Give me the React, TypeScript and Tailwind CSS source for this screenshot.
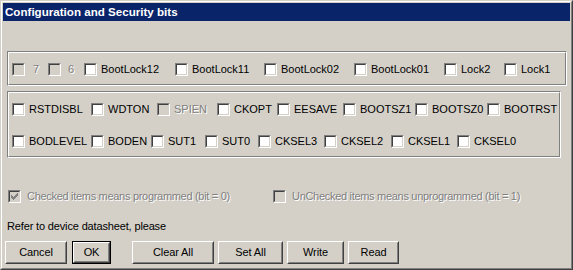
import React from "react";

const CHECK_ROWS = [
  "......#",
  ".....##",
  "#...###",
  "##.###.",
  "#####..",
  ".###...",
  "..#....",
];

function CheckMark({ color }: { color: string }) {
  return (
    <svg width="7" height="7" viewBox="0 0 7 7" shapeRendering="crispEdges">
      {CHECK_ROWS.flatMap((r, y) =>
        r.split("").map((c, x) =>
          c === "#" ? <rect key={`${x}-${y}`} x={x} y={y} width="1" height="1" fill={color} /> : null
        )
      )}
    </svg>
  );
}

function Box({ disabled, checked }: { disabled?: boolean; checked?: boolean }) {
  return (
    <div className="w-[13px] h-[13px] shrink-0 border border-t-[#808080] border-l-[#808080] border-r-white border-b-white">
      <div
        className={`w-full h-full border border-t-[#404040] border-l-[#404040] border-r-[#d4d0c8] border-b-[#d4d0c8] flex items-center justify-center ${
          disabled ? "bg-[#d4d0c8]" : "bg-white"
        }`}
      >
        {checked && <CheckMark color={disabled ? "#808080" : "#000000"} />}
      </div>
    </div>
  );
}

type Item = { l: string; w: string; d?: boolean; gap?: string };

function Check({ item }: { item: Item }) {
  return (
    <div className={`flex items-center shrink-0 h-[13px] ${item.w}`}>
      <Box disabled={item.d} />
      <span
        className={`${item.gap ?? "ml-[4px]"} text-[11px] leading-[13px] whitespace-nowrap ${
          item.d ? "text-[#808080] [text-shadow:1px_1px_0_#ffffff]" : "text-black"
        }`}
      >
        {item.l}
      </span>
    </div>
  );
}

const ROW_A: Item[] = [
  { l: "7", w: "w-[36px]", d: true, gap: "ml-[8px]" },
  { l: "6", w: "w-[36px]", d: true, gap: "ml-[7px]" },
  { l: "BootLock12", w: "w-[91px]" },
  { l: "BootLock11", w: "w-[89px]" },
  { l: "BootLock02", w: "w-[90px]" },
  { l: "BootLock01", w: "w-[90px]" },
  { l: "Lock2", w: "w-[60px]" },
  { l: "Lock1", w: "" },
];

const ROW_B: Item[] = [
  { l: "RSTDISBL", w: "w-[79px]" },
  { l: "WDTON", w: "w-[66px]" },
  { l: "SPIEN", w: "w-[60px]", d: true },
  { l: "CKOPT", w: "w-[60px]" },
  { l: "EESAVE", w: "w-[66px]" },
  { l: "BOOTSZ1", w: "w-[72px]" },
  { l: "BOOTSZ0", w: "w-[72px]" },
  { l: "BOOTRST", w: "" },
];

const ROW_C: Item[] = [
  { l: "BODLEVEL", w: "w-[79px]" },
  { l: "BODEN", w: "w-[60px]" },
  { l: "SUT1", w: "w-[54px]" },
  { l: "SUT0", w: "w-[53px]" },
  { l: "CKSEL3", w: "w-[66px]" },
  { l: "CKSEL2", w: "w-[67px]" },
  { l: "CKSEL1", w: "w-[66px]" },
  { l: "CKSEL0", w: "" },
];

function Btn({ label, cls, def }: { label: string; cls: string; def?: boolean }) {
  const face = (
    <div className="h-full w-full border border-t-white border-l-white border-r-[#404040] border-b-[#404040]">
      <div className="h-full w-full border border-t-[#d4d0c8] border-l-[#d4d0c8] border-r-[#808080] border-b-[#808080] flex items-center justify-center text-[11px] leading-[13px] text-black tracking-[-0.1px]">
        {label}
      </div>
    </div>
  );
  return (
    <button type="button" className={`h-[23px] shrink-0 bg-[#d4d0c8] ${cls} ${def ? "border border-black" : ""}`}>
      {face}
    </button>
  );
}

export default function App() {
  return (
    <div className="w-[573px] h-[270px] font-['Liberation_Sans',Arial,sans-serif] border border-t-[#d4d0c8] border-l-[#d4d0c8] border-r-[#404040] border-b-[#404040]">
      <div className="w-full h-full border border-t-white border-l-white border-r-[#808080] border-b-[#808080] bg-[#d4d0c8] p-[1px] flex flex-col">
        {/* Title bar */}
        <div className="h-[18px] shrink-0 bg-[#0a246a] flex items-center pl-[2px]">
          <span className="text-white font-bold text-[11.6px] leading-[14px] whitespace-nowrap">
            Configuration and Security bits
          </span>
        </div>

        {/* Group 1 */}
        <div className="mt-[30px] ml-[4px] w-[560px] h-[35px] shrink-0 border border-t-[#808080] border-l-[#808080] border-r-white border-b-white">
          <div className="h-full border border-t-white border-l-white border-r-[#808080] border-b-[#808080] pt-[10px] pl-[3px] flex">
            {ROW_A.map((it) => (
              <Check key={it.l} item={it} />
            ))}
          </div>
        </div>

        {/* Group 2 */}
        <div className="mt-[5px] ml-[4px] w-[554px] h-[67px] shrink-0 border border-t-[#808080] border-l-[#808080] border-r-white border-b-white">
          <div className="h-full border border-t-white border-l-white border-r-[#808080] border-b-[#808080] pt-[10px] pl-[3px] flex flex-col gap-[19px]">
            <div className="flex">
              {ROW_B.map((it) => (
                <Check key={it.l} item={it} />
              ))}
            </div>
            <div className="flex">
              {ROW_C.map((it) => (
                <Check key={it.l} item={it} />
              ))}
            </div>
          </div>
        </div>

        {/* Legend */}
        <div className="mt-[32px] ml-[5px] flex h-[13px] shrink-0">
          <div className="w-[265px] flex items-center shrink-0">
            <Box disabled checked />
            <span className="ml-[6px] text-[11px] leading-[13px] tracking-[-0.3px] whitespace-nowrap text-[#808080] [text-shadow:1px_1px_0_#ffffff]">
              Checked items means programmed (bit = 0)
            </span>
          </div>
          <div className="flex items-center shrink-0">
            <Box disabled />
            <span className="ml-[6px] text-[11px] leading-[13px] tracking-[-0.3px] whitespace-nowrap text-[#808080] [text-shadow:1px_1px_0_#ffffff]">
              UnChecked items means unprogrammed (bit = 1)
            </span>
          </div>
        </div>

        <div className="mt-[17px] ml-[4px] h-[13px] shrink-0 text-[11px] leading-[13px] tracking-[-0.15px] text-black whitespace-nowrap">
          Refer to device datasheet, please
        </div>

        {/* Buttons */}
        <div className="mt-[8px] flex shrink-0">
          <Btn label="Cancel" cls="ml-[2px] w-[62px]" />
          <Btn label="OK" cls="ml-[5px] w-[39px]" def />
          <Btn label="Clear All" cls="ml-[21px] w-[82px]" />
          <Btn label="Set All" cls="ml-[4px] w-[65px]" />
          <Btn label="Write" cls="ml-[4px] w-[57px]" />
          <Btn label="Read" cls="ml-[4px] w-[51px]" />
        </div>
      </div>
    </div>
  );
}
